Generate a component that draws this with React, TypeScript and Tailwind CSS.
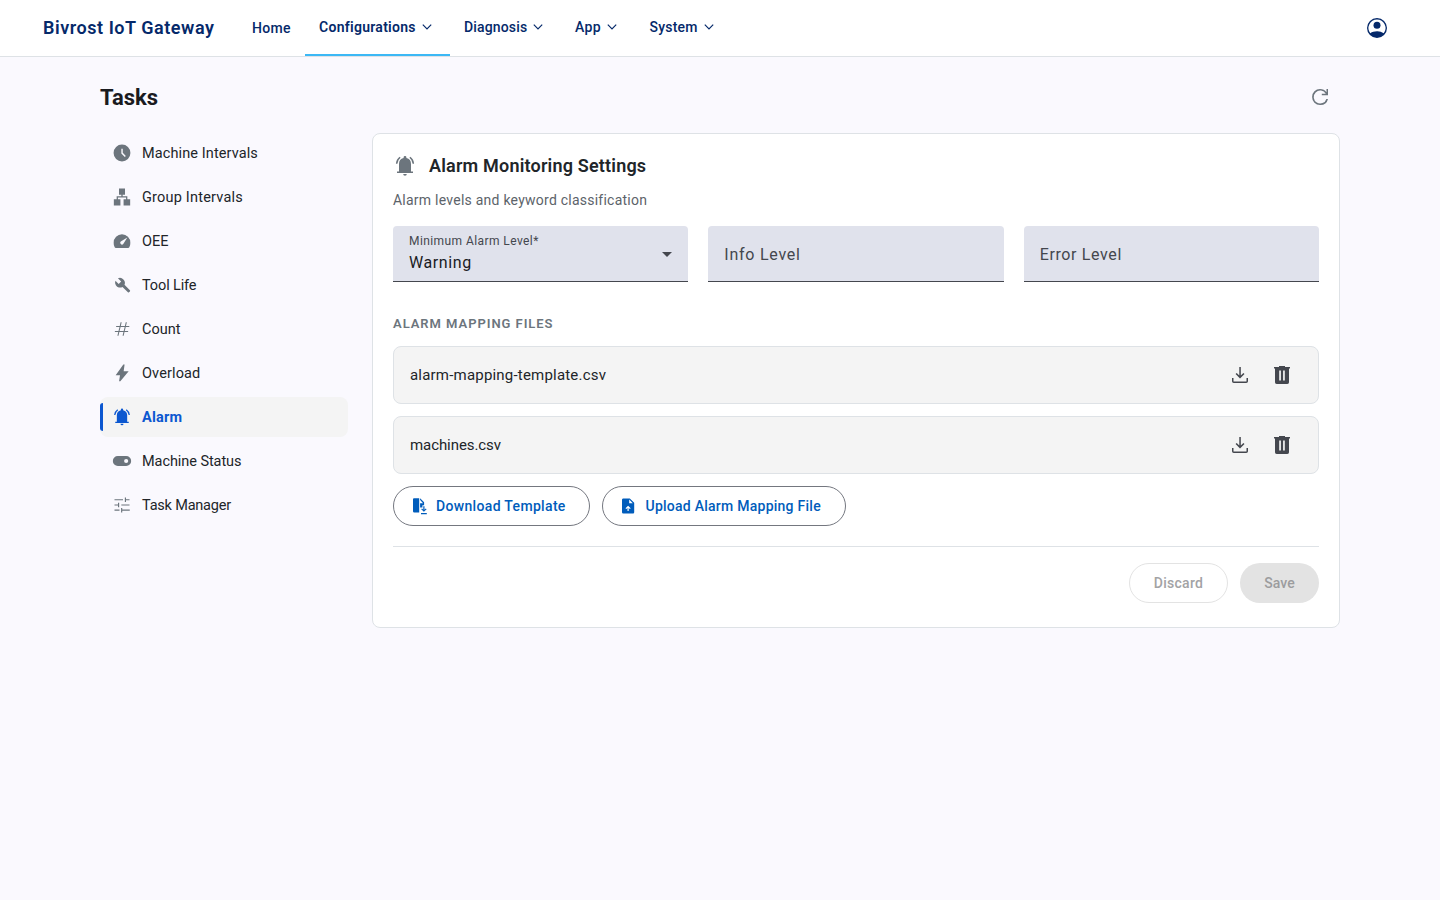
import type { ReactNode } from "react";

type IconProps = { className?: string };

function Svg({ className = "", size = 20, children }: { className?: string; size?: number; children: ReactNode }) {
  return (
    <svg width={size} height={size} viewBox="0 0 24 24" fill="currentColor" className={`shrink-0 ${className}`} aria-hidden="true">
      {children}
    </svg>
  );
}

const ClockIcon = () => (
  <Svg>
    <path fillRule="evenodd" d="M12 1.900a10.100 10.100 0 1 0 0 20.200 10.100 10.100 0 0 0 0-20.200Zm3.400 14.900L11.200 12.500V6.800h1.700v5l3.700 3.800Z" />
  </Svg>
);

const GroupIcon = () => (
  <Svg>
    <path d="M2.200 22.200v-7.400h3.400v-3.600h5.600V9.200H8.400V1.900h7.200v7.300h-2.800v2h5.600v3.600h3.400v7.400h-7.900v-7.400h3v-2.100H7.100v2.100h3v7.400Z" />
  </Svg>
);

const GaugeIcon = () => (
  <Svg>
    <path
      fillRule="evenodd"
      d="M4.600 20.400c-.6 0-1.100-.3-1.400-.8A9.900 9.900 0 0 1 2 14.200 10 10 0 0 1 12 4a10 10 0 0 1 10 10.200 9.900 9.900 0 0 1-1.200 5.400c-.3.500-.8.800-1.400.8ZM10.500 15.600a2.100 2.100 0 0 0 3 0l4.900-7.800-7.900 4.900a2 2 0 0 0 0 2.900Z"
    />
  </Svg>
);

const WrenchIcon = () => (
  <Svg>
    <path d="M19.100 20.800 12.600 14.300a6 6 0 0 1-8-2 6 6 0 0 1-.5-5.400l3.900 3.900 3-2.900-3.900-3.900a6 6 0 0 1 6.600 1.300 6 6 0 0 1 1.300 6.500l6.500 6.600c.4.400.4.900 0 1.300l-1.200 1.100c-.4.400-.8.400-1.200 0Z" />
  </Svg>
);

const HashIcon = () => (
  <Svg>
    <path d="m6.500 20 1-4.300H3.300l.3-1.300h4.200l1.200-4.800H4.800l.3-1.300h4.200l1-4.300h1.300l-1 4.300h4.900l1-4.300h1.300l-1 4.300h4.100l-.3 1.300h-4.100l-1.200 4.800h4.200l-.3 1.300h-4.200l-1 4.300h-1.300l1-4.300H8.800l-1 4.300Zm2.600-5.600H14l1.200-4.800h-4.900Z" />
  </Svg>
);

const BoltIcon = () => (
  <Svg>
    <path d="m8.500 22 1.100-7.400H4.400L13.600 1.800h1.500L14 9.800h6L10 22Z" />
  </Svg>
);

const BellIcon = ({ className = "" }: IconProps) => (
  <Svg className={className}>
    <path d="M3.900 19.200v-1.600h1.900V10a6.300 6.300 0 0 1 4.800-6.100v-.6a1.400 1.400 0 0 1 2.800 0v.6a6.300 6.300 0 0 1 4.800 6.100v7.600h1.900v1.600ZM12 22a1.800 1.800 0 0 1-1.800-1.800h3.600A1.800 1.800 0 0 1 12 22ZM2.500 9.700a9.500 9.500 0 0 1 3.900-7l1 1.200A8 8 0 0 0 4 9.700Zm17.500 0a8 8 0 0 0-3.400-5.800l1-1.200a9.500 9.500 0 0 1 3.900 7Z" />
  </Svg>
);

const ToggleIcon = () => (
  <Svg>
    <path fillRule="evenodd" d="M7 18A6 6 0 0 1 7 6h10a6 6 0 0 1 0 12Zm10-3.500a2.500 2.500 0 1 0 0-5 2.500 2.500 0 0 0 0 5Z" />
  </Svg>
);

const TuneIcon = () => (
  <Svg>
    <path d="M10.900 21v-5.500h1.400v2h9v1.400h-9V21ZM3 18.900v-1.400h6v1.400Zm4.200-4.200v-2H3v-1.400h4.200V9.200h1.400v5.500Zm4-2v-1.400H21v1.400Zm4.200-4.200V3h1.400v2H21v1.400h-4.200v2.100ZM3 6.400V5h10.200v1.400Z" />
  </Svg>
);

const UserIcon = () => (
  <Svg size={24} className="text-[#05296a]">
    <path
      fillRule="evenodd"
      d="M12 2a10 10 0 1 0 0 20 10 10 0 0 0 0-20Zm0 1.500a8.500 8.500 0 0 1 6.700 13.700A11.500 11.500 0 0 0 12 15.300c-2.600 0-4.900.7-6.700 1.900A8.500 8.500 0 0 1 12 3.500Z"
    />
    <circle cx="12" cy="9.300" r="3.500" />
  </Svg>
);

const RefreshIcon = () => (
  <Svg size={24} className="text-[#6c757d]">
    <path d="M12.100 20a7.900 7.900 0 0 1-8-8 7.900 7.900 0 0 1 8-8 8 8 0 0 1 6.400 3.200V4H20v6.200h-6.200V8.700h4A6.500 6.500 0 1 0 18.400 14H20a7.900 7.900 0 0 1-7.900 6Z" />
  </Svg>
);

const DownloadIcon = () => (
  <Svg size={24} className="text-[#44474e]">
    <path d="m12 15.400-4.400-4.400 1.100-1.100 2.600 2.600V4h1.500v8.500l2.600-2.600 1.100 1.100ZM5.800 20A1.800 1.800 0 0 1 4 18.200v-3.100h1.500v3.100c0 .2.100.3.300.3h12.400c.2 0 .3-.1.300-.3v-3.100H20v3.100a1.800 1.800 0 0 1-1.800 1.800Z" />
  </Svg>
);

const TrashIcon = () => (
  <Svg size={24} className="text-[#44474e]">
    <path fillRule="evenodd" d="M6.700 21A1.700 1.700 0 0 1 5 19.200V5.500H4V4h5v-.9h6V4h5v1.500h-1v13.700a1.700 1.700 0 0 1-1.700 1.800ZM9.200 17.500h1.700v-10H9.200Zm3.900 0h1.700v-10h-1.700Z" />
  </Svg>
);

const FileDownIcon = () => (
  <svg width="18" height="18" viewBox="0 0 18 18" fill="currentColor" className="shrink-0" aria-hidden="true">
    <path d="M3.200 15.400A1.200 1.200 0 0 1 2 14.200V2.500c0-.7.500-1.200 1.200-1.200h5v14.100Z" />
    <path d="M9.100 1.300 13.100 5.200v3h-1.700v2.300H9.100V6.200h3L9.100 3.100Z" />
    <path d="M12.300 9.200h1.200v3.500l1.300-1.300.8.800-2.700 2.600-2.700-2.600.8-.8 1.300 1.300ZM10 16h5.800v1.200H10Z" />
  </svg>
);

const FileUpIcon = () => (
  <svg width="18" height="18" viewBox="0 0 18 18" fill="currentColor" className="shrink-0" aria-hidden="true">
    <path
      fillRule="evenodd"
      d="M4.300 16.500A1.300 1.300 0 0 1 3 15.200V2.700c0-.7.600-1.300 1.300-1.300h6.500L15.200 5.700v9.500c0 .7-.6 1.300-1.300 1.300ZM10.200 6.200h3.600l-3.600-3.600ZM8.500 13.900h1.200v-3l1.200 1.200.8-.8L9.100 8.700 6.500 11.300l.8.800 1.200-1.200Z"
    />
  </svg>
);

const Chevron = () => (
  <svg width="10" height="6" viewBox="0 0 10 6" fill="none" stroke="currentColor" strokeWidth="1.200" className="shrink-0" aria-hidden="true">
    <path d="M.8.700 5 4.900 9.200.700" />
  </svg>
);

const menus = [
  { label: "Configurations", width: "w-[145px]", text: "w-[97px] tracking-[0.28px]", active: true },
  { label: "Diagnosis", width: "w-[111px]", text: "w-[63px] tracking-[0.15px]", active: false },
  { label: "App", width: "w-[74px]", text: "w-[26px] tracking-[0.35px]", active: false },
  { label: "System", width: "w-[97px] ml-[0.5px]", text: "w-[48px] tracking-[0.2px]", active: false },
];

const tasks = [
  { label: "Machine Intervals", icon: <ClockIcon />, text: "tracking-[0.1px]" },
  { label: "Group Intervals", icon: <GroupIcon />, text: "tracking-[0.2px]" },
  { label: "OEE", icon: <GaugeIcon />, text: "" },
  { label: "Tool Life", icon: <WrenchIcon />, text: "tracking-[-0.12px]" },
  { label: "Count", icon: <HashIcon />, text: "" },
  { label: "Overload", icon: <BoltIcon />, text: "tracking-[0.13px]" },
  { label: "Alarm", icon: <BellIcon />, text: "tracking-[0.2px]" },
  { label: "Machine Status", icon: <ToggleIcon />, text: "tracking-[-0.07px]" },
  { label: "Task Manager", icon: <TuneIcon />, text: "tracking-[-0.2px]" },
];

function Header() {
  return (
    <header className="flex h-[57px] items-start border-b border-[#dee2e6] bg-white pl-[43px] text-[#05296a]">
      <div className="h-14 w-[195px] text-[18px] leading-[56px] font-semibold tracking-[0.54px]">Bivrost IoT Gateway</div>
      <nav className="flex h-14 text-[14px] font-medium">
        <a className="w-[67px] pl-[14px] leading-[57px] tracking-[0.35px]">Home</a>
        {menus.map((m) => (
          <a
            key={m.label}
            className={`flex h-14 items-center border-b-2 pl-[14px] ${m.width} ${m.active ? "border-[#3cb8f5] font-semibold" : "border-transparent"}`}
          >
            <span className={m.text}>{m.label}</span>
            <span className="ml-[6px]">
              <Chevron />
            </span>
          </a>
        ))}
      </nav>
      <button className="mt-4 mr-[51px] ml-auto">
        <UserIcon />
      </button>
    </header>
  );
}

function Sidebar() {
  return (
    <ul className="flex w-[248px] flex-col gap-1">
      {tasks.map((t) => {
        const active = t.label === "Alarm";
        return (
          <li
            key={t.label}
            className={`flex h-10 items-center rounded-lg text-[14.500px] ${active ? "bg-[#f4f4f4] font-bold text-[#0b57d0]" : "text-[#212529]"}`}
          >
            <span className={`h-7 w-[3px] rounded-l-sm ${active ? "bg-[#0b57d0]" : ""}`} />
            <span className={`mr-[10px] ml-[9px] ${active ? "" : "text-[#6c757d]"}`}>{t.icon}</span>
            <span className={`pt-0.5 ${t.text}`}>{t.label}</span>
          </li>
        );
      })}
    </ul>
  );
}

function EmptyField({ label, text }: { label: string; text: string }) {
  return (
    <div className={`flex h-14 items-center rounded-t border-b border-[#44474e] bg-[#e0e2ec] pt-0.5 pl-4 text-[16px] text-[#44474e] ${text}`}>
      {label}
    </div>
  );
}

function FileRow({ name, text }: { name: string; text: string }) {
  return (
    <div className="mb-3 flex h-[58px] items-center rounded-lg border border-[#dee2e6] bg-[#f4f4f4] pr-6 pl-4 text-[15px] text-[#212529]">
      <span className={`flex-1 ${text}`}>{name}</span>
      <span className="mr-[18px]">
        <DownloadIcon />
      </span>
      <TrashIcon />
    </div>
  );
}

export default function App() {
  return (
    <div className="min-h-screen bg-[#faf9fe] font-['Roboto',sans-serif] whitespace-nowrap">
      <Header />
      <main className="px-[100px]">
        <div className="flex h-[76px] items-center justify-between pt-1 pr-2">
          <h1 className="text-[22px] font-bold text-[#1a1b1f]">Tasks</h1>
          <RefreshIcon />
        </div>
        <div className="flex items-start gap-6">
          <Sidebar />
          <section className="h-[495px] flex-1 rounded-lg border border-[#dee2e6] bg-white px-5">
            <div className="mt-5 flex h-6 items-center">
              <svg width="24" height="24" viewBox="0 0 24 24" className="mr-3 shrink-0 text-[#6c757d]" fill="currentColor" aria-hidden="true">
                <path d="M4 19v-1.500h2V10a6 6 0 0 1 4.600-5.900v-.7a1.400 1.400 0 0 1 2.800 0v.7A6 6 0 0 1 18 10v7.500h2V19ZM12 21.800a1.800 1.800 0 0 1-1.800-1.800h3.600a1.800 1.800 0 0 1-1.800 1.800ZM2.900 9.700a9.500 9.500 0 0 1 3.700-7l1 1.100a8 8 0 0 0-3.200 5.900Zm16.700 0a8 8 0 0 0-3.200-5.900l1-1.100a9.500 9.500 0 0 1 3.700 7Z" />
              </svg>
              <h2 className="pb-0.5 text-[18px] font-semibold tracking-[0.19px] text-[#212529]">Alarm Monitoring Settings</h2>
            </div>
            <p className="mt-3 h-5 text-[14px] leading-5 tracking-[0.24px] text-[#5c636a]">Alarm levels and keyword classification</p>
            <div className="mt-4 grid grid-cols-3 gap-5">
              <div className="flex h-14 items-center rounded-t border-b border-[#44474e] bg-[#e0e2ec] pr-4 pl-4">
                <div className="flex-1">
                  <div className="text-[12px] leading-4 tracking-[0.42px] text-[#44474e]">Minimum Alarm Level*</div>
                  <div className="mt-px h-6 text-[16px] leading-[26px] tracking-[0.6px] text-[#1a1b1f]">Warning</div>
                </div>
                <svg width="10" height="5" viewBox="0 0 10 5" className="mt-0.5 text-[#44474e]" fill="currentColor" aria-hidden="true">
                  <path d="M0 0h10L5 5Z" />
                </svg>
              </div>
              <EmptyField label="Info Level" text="tracking-[0.75px]" />
              <EmptyField label="Error Level" text="tracking-[0.64px]" />
            </div>
            <h3 className="mt-8 mb-3 h-5 text-[13px] leading-5 font-semibold tracking-[0.95px] text-[#6c757d]">ALARM MAPPING FILES</h3>
            <FileRow name="alarm-mapping-template.csv" text="tracking-[0.2px]" />
            <FileRow name="machines.csv" text="tracking-[-0.08px]" />
            <div className="flex gap-3 text-[14px] font-medium text-[#005cbb]">
              <button className="flex h-10 w-[197px] items-center rounded-full border border-[#74777f] pl-[17px]">
                <FileDownIcon />
                <span className="ml-[7px] tracking-[0.33px]">Download Template</span>
              </button>
              <button className="flex h-10 w-[244px] items-center rounded-full border border-[#74777f] pl-[16px]">
                <FileUpIcon />
                <span className="ml-[8.500px] tracking-[0.25px]">Upload Alarm Mapping File</span>
              </button>
            </div>
            <div className="mt-5 flex justify-end gap-3 border-t border-[#dee2e6] pt-4 text-[14px] font-medium">
              <button className="h-10 w-[99px] rounded-full border border-[#e3e3e3] tracking-[0.3px] text-[#a3a3a5]">Discard</button>
              <button className="h-10 w-[79px] rounded-full bg-[#e3e3e3] tracking-[0.1px] text-[#9c9c9e]">Save</button>
            </div>
          </section>
        </div>
      </main>
    </div>
  );
}
